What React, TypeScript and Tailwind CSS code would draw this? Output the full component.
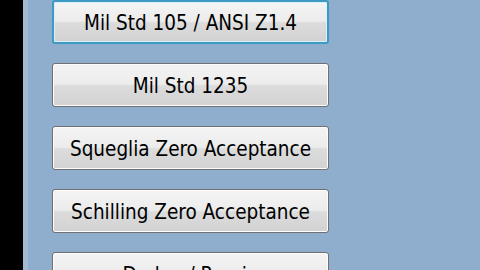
const labels = [
  "Mil Std 105 / ANSI Z1.4",
  "Mil Std 1235",
  "Squeglia Zero Acceptance",
  "Schilling Zero Acceptance",
  "Dodge / Romig",
];

export default function App() {
  return (
    <div className="flex h-[270px] w-[480px] overflow-hidden bg-[#8fadcc]">
      <div className="w-[23px] shrink-0 bg-black" />
      <div className="w-[5px] shrink-0 bg-[#a2b9d4]" />
      <div className="flex flex-col gap-[19px] pl-[24px]">
        {labels.map((label, i) => (
          <button
            key={label}
            className={
              i === 0
                ? "h-[44px] w-[277px] shrink-0 rounded-[3px] border-2 border-[#3d9ac4] bg-[linear-gradient(#f4f4f4_0%,#ececec_48%,#dcdcdc_52%,#d2d2d2_100%)] pt-[2px] text-[20.5px] text-black shadow-[inset_0_0_0_1px_#d8f0fa] font-['DejaVu_Sans_Condensed','Liberation_Sans',sans-serif]"
                : "h-[44px] w-[277px] shrink-0 rounded-[3px] border border-[#707070] bg-[linear-gradient(#f4f4f4_0%,#ececec_48%,#dcdcdc_52%,#d2d2d2_100%)] pt-[2px] text-[20.5px] text-black shadow-[inset_0_0_0_1px_#fcfcfc] font-['DejaVu_Sans_Condensed','Liberation_Sans',sans-serif]"
            }
          >
            {label}
          </button>
        ))}
      </div>
    </div>
  );
}
